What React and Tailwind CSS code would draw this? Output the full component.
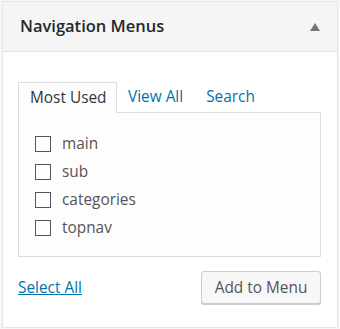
const items = ["main", "sub", "categories", "topnav"];

export default function App() {
  return (
    <div
      className="w-[340px] h-[329px] bg-[#f7f7f7] pt-px pl-[2px]"
      style={{ fontFamily: '"Open Sans", sans-serif' }}
    >
      <div className="w-[336px] h-[327px] border border-[#e5e5e5] bg-white flex flex-col">
        <div className="h-[50px] bg-[#f5f5f5] border-b border-[#e5e5e5] flex items-center justify-between pl-[17px] pr-[17px]">
          <h3 className="text-[16.5px] font-semibold text-[#23282d] leading-none">
            Navigation Menus
          </h3>
          <span className="w-0 h-0 border-l-[5px] border-r-[5px] border-b-[8px] border-l-transparent border-r-transparent border-b-[#72777c]" />
        </div>
        <div className="pt-[30px] px-[15px]">
          <div className="flex items-end text-[15.4px] leading-none">
            <div className="h-[31px] w-[99px] border border-[#dddddd] border-b-0 bg-[#fdfdfd] -mb-px relative z-10 pl-[11px] flex items-center text-[#32373c]">
              Most Used
            </div>
            <div className="h-[30px] pl-[11px] flex items-center text-[#0073aa]">
              View All
            </div>
            <div className="h-[30px] pl-[23px] flex items-center text-[#0073aa]">
              Search
            </div>
          </div>
          <div className="w-[303px] h-[145px] border border-[#dddddd] bg-[#fdfdfd] pt-[23px] pl-[16px] flex flex-col gap-[12px]">
            {items.map((item) => (
              <label key={item} className="flex items-center gap-[11px] h-4">
                <span className="w-4 h-4 border border-[#555] bg-white shrink-0" />
                <span className="text-[15.4px] text-[#555] leading-none">{item}</span>
              </label>
            ))}
          </div>
          <div className="flex items-center justify-between mt-[14px]">
            <a className="text-[15.4px] text-[#0073aa] underline">Select All</a>
            <button className="h-[33px] w-[120px] border border-[#cccccc] bg-[#f7f7f7] rounded-[3px] shadow-[0_1px_0_#cccccc] text-[15.4px] text-[#555] mr-[1px]">
              Add to Menu
            </button>
          </div>
        </div>
      </div>
    </div>
  );
}
